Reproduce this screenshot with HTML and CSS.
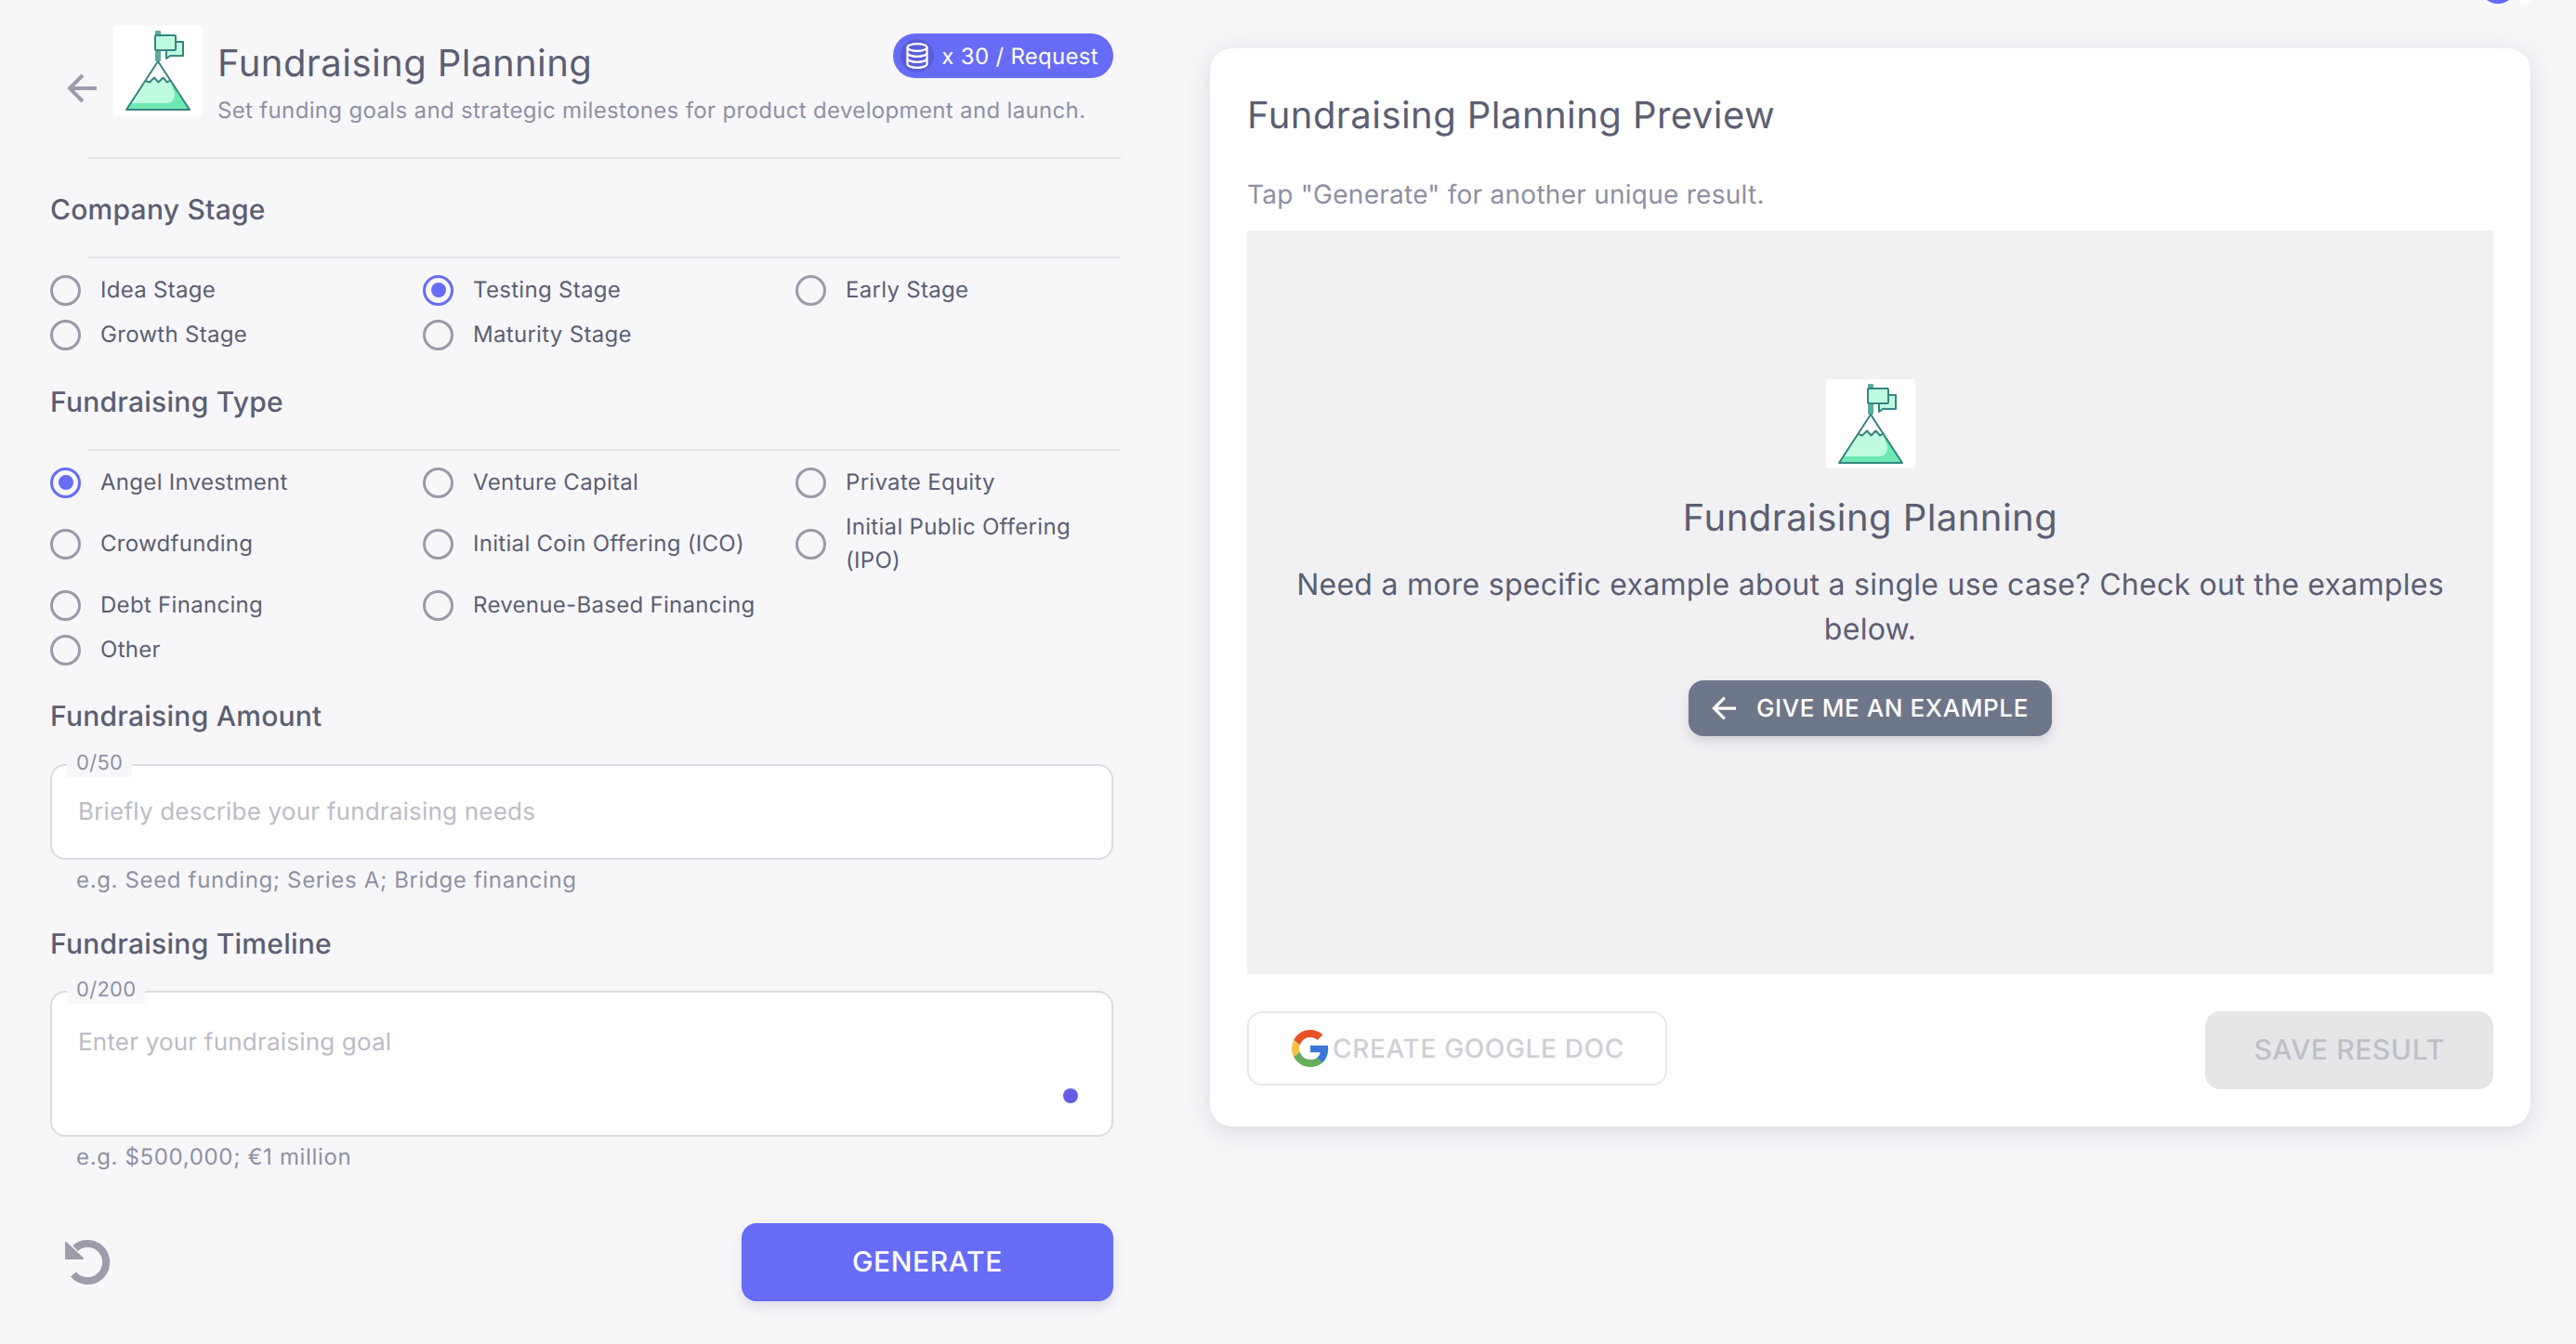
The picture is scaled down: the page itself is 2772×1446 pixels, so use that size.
FILE: index.html
```html
<!DOCTYPE html>
<html lang="en">
<head>
    <meta charset="UTF-8">
    <title>Fundraising Planning</title>
    <link rel="stylesheet" href="styles.css">
</head>
<body>
    <svg class="defs" width="0" height="0">
        <symbol id="mountain" viewBox="0 0 96 96">
            <rect width="96" height="96" fill="#fff"/>
            <rect x="45" y="5" width="6" height="33" rx="1" fill="#5aae98"/>
            <path d="M57 17H75V32H61L57 35Z" fill="#bdfbe0" stroke="#35847f" stroke-width="2" stroke-linejoin="round"/>
            <rect x="45" y="10" width="22" height="16" rx="1" fill="#bdfbe0" stroke="#35847f" stroke-width="2"/>
            <path d="M48 38L82 90H14Z" fill="#6fe9b4"/>
            <path d="M35 58L48 38L60 56L66 72Q66 83 58 83H19Z" fill="#c0fcdf"/>
            <path d="M34.5 59L48 38L62 58L58 60.5L53.5 55.5L48.5 60.5L44 55.5L39 60.5Z" fill="#fff"/>
            <path d="M34.5 59L39 60.5L44 55.5L48.5 60.5L53.5 55.5L58 60.5L62 58" fill="none" stroke="#35847f" stroke-width="2" stroke-linejoin="round"/>
            <path d="M48 38L82 90H14Z" fill="none" stroke="#35847f" stroke-width="2" stroke-linejoin="round"/>
        </symbol>
        <symbol id="arrow-left" viewBox="0 0 32 32">
            <path d="M32 16H3M17 2L3 16L17 30" fill="none" stroke="currentColor" stroke-width="4"/>
        </symbol>
    </svg>

    <div class="corner-avatar"></div>
    <div class="corner-dot"></div>

    <main class="page">
        <section class="form-panel">
            <header class="tool-header">
                <svg class="back-arrow"><use href="#arrow-left"/></svg>
                <svg class="tool-logo"><use href="#mountain"/></svg>
                <div class="tool-text">
                    <div class="tool-title-row">
                        <h1 class="tool-title">Fundraising Planning</h1>
                        <div class="cost-badge">
                            <span class="cost-icon">
                                <svg width="24" height="28" viewBox="0 0 24 28" fill="none" stroke="#fff" stroke-width="2.2">
                                    <ellipse cx="12" cy="5" rx="10.5" ry="3.8"/>
                                    <path d="M1.5 5V23C1.5 25 6 26.8 12 26.8S22.5 25 22.5 23V5"/>
                                    <path d="M1.5 11C1.5 13 6 14.8 12 14.8S22.5 13 22.5 11"/>
                                    <path d="M1.5 17C1.5 19 6 20.8 12 20.8S22.5 19 22.5 17"/>
                                </svg>
                            </span>
                            x 30 / Request
                        </div>
                    </div>
                    <p class="tool-desc">Set funding goals and strategic milestones for product development and launch.</p>
                </div>
            </header>

            <h2 class="field-label label-stage">Company Stage</h2>
            <div class="radio-grid">
                <label class="radio-item"><span class="radio"></span>Idea Stage</label>
                <label class="radio-item"><span class="radio checked"></span>Testing Stage</label>
                <label class="radio-item"><span class="radio"></span>Early Stage</label>
                <label class="radio-item"><span class="radio"></span>Growth Stage</label>
                <label class="radio-item"><span class="radio"></span>Maturity Stage</label>
            </div>

            <h2 class="field-label label-type">Fundraising Type</h2>
            <div class="radio-grid">
                <label class="radio-item spaced"><span class="radio checked"></span>Angel Investment</label>
                <label class="radio-item spaced"><span class="radio"></span>Venture Capital</label>
                <label class="radio-item spaced"><span class="radio"></span>Private Equity</label>
                <label class="radio-item tall"><span class="radio"></span>Crowdfunding</label>
                <label class="radio-item tall"><span class="radio"></span>Initial Coin Offering (ICO)</label>
                <label class="radio-item tall"><span class="radio"></span>Initial Public Offering (IPO)</label>
                <label class="radio-item"><span class="radio"></span>Debt Financing</label>
                <label class="radio-item"><span class="radio"></span>Revenue-Based Financing</label>
                <span></span>
                <label class="radio-item"><span class="radio"></span>Other</label>
            </div>

            <h2 class="field-label label-amount">Fundraising Amount</h2>
            <div class="text-field amount-field">
                <span class="counter">0/50</span>
                <span class="placeholder">Briefly describe your fundraising needs</span>
            </div>
            <p class="helper">e.g. Seed funding; Series A; Bridge financing</p>

            <h2 class="field-label label-timeline">Fundraising Timeline</h2>
            <div class="text-field timeline-field">
                <span class="counter">0/200</span>
                <span class="placeholder">Enter your fundraising goal</span>
                <span class="field-dot"></span>
            </div>
            <p class="helper">e.g. $500,000; €1 million</p>

            <div class="form-actions">
                <svg class="reset-icon" width="56" height="56" viewBox="0 0 56 56">
                    <path d="M12 40A20 20 0 1 0 14 12" fill="none" stroke="#9c9cab" stroke-width="8"/>
                    <path d="M4 6V23H22Z" fill="#9c9cab" stroke="#9c9cab" stroke-width="2" stroke-linejoin="round"/>
                </svg>
                <button class="generate-btn">GENERATE</button>
            </div>
        </section>

        <section class="preview-card">
            <h2 class="preview-title">Fundraising Planning Preview</h2>
            <p class="preview-hint">Tap "Generate" for another unique result.</p>
            <div class="preview-box">
                <svg class="tool-logo"><use href="#mountain"/></svg>
                <h3 class="preview-name">Fundraising Planning</h3>
                <p class="preview-text">Need a more specific example about a single use case? Check out the examples below.</p>
                <button class="example-btn">
                    <svg width="26" height="26"><use href="#arrow-left"/></svg>
                    GIVE ME AN EXAMPLE
                </button>
            </div>
            <div class="preview-actions">
                <button class="gdoc-btn">
                    <svg width="40" height="40" viewBox="0 0 48 48">
                        <path fill="#ea5028" d="M24 9.5c3.5 0 6.7 1.2 9.2 3.6l6.9-6.9C35.900 2.400 30.500 0 24 0 14.600 0 6.500 5.400 2.600 13.200l8 6.200C12.500 13.700 17.800 9.500 24 9.500z"/>
                        <path fill="#3b78d8" d="M47 24.500c0-1.600-.1-3.100-.4-4.500H24v9h12.900c-.6 3-2.200 5.500-4.700 7.200l7.700 6C44.400 37.900 47 31.800 47 24.500z"/>
                        <path fill="#f8c146" d="M10.500 28.600c-.5-1.400-.8-3-.8-4.600s.3-3.200.8-4.600l-8-6.200C.9 16.400 0 20.100 0 24s.9 7.600 2.600 10.800z"/>
                        <path fill="#66ad5c" d="M24 48c6.500 0 11.900-2.100 15.900-5.800l-7.700-6c-2.200 1.400-4.900 2.300-8.200 2.300-6.200 0-11.500-4.200-13.400-9.900l-8 6.200C6.500 42.600 14.600 48 24 48z"/>
                    </svg>
                    CREATE GOOGLE DOC
                </button>
                <button class="save-btn">SAVE RESULT</button>
            </div>
        </section>
    </main>
</body>
</html>
```

FILE: styles.css
```css
* {
    margin: 0;
    padding: 0;
    box-sizing: border-box;
}

body {
    font-family: Inter, "Noto Sans", sans-serif;
    background-color: #f7f7fa;
    color: #5c5e72;
    height: 1446px;
    overflow: hidden;
    position: relative;
    text-rendering: geometricPrecision;
}

button {
    font-family: inherit;
    border: none;
    text-rendering: geometricPrecision;
}

.defs {
    position: absolute;
}

.corner-avatar {
    position: absolute;
    left: 2668px;
    top: -36px;
    width: 40px;
    height: 40px;
    border-radius: 50%;
    background-color: #6569f5;
}

.corner-dot {
    position: absolute;
    left: 2708px;
    top: -14px;
    width: 18px;
    height: 18px;
    border-radius: 50%;
    background-color: #a5e05a;
    border: 4px solid #fff;
}

.page {
    display: flex;
    align-items: flex-start;
    gap: 104px;
    padding-left: 54px;
}

.form-panel {
    width: 1144px;
    flex-shrink: 0;
}

.tool-header {
    position: relative;
    display: flex;
    padding-top: 28px;
    padding-left: 68px;
    height: 171px;
    width: 1152px;
    background: linear-gradient(#e4e4e8, #e4e4e8) 40px 100% / 1112px 2px no-repeat;
}

.back-arrow {
    position: absolute;
    left: 18px;
    top: 79px;
    width: 32px;
    height: 32px;
    color: #9c9cab;
}

.tool-logo {
    display: block;
    width: 96px;
    height: 96px;
    flex-shrink: 0;
}

.tool-text {
    margin-left: 16px;
    width: 964px;
}

.tool-title-row {
    display: flex;
    justify-content: space-between;
    align-items: flex-start;
    width: 964px;
}

.tool-title {
    font-size: 40px;
    font-weight: 400;
    line-height: 48px;
    letter-spacing: 0.45px;
    margin-top: 16px;
}

.cost-badge {
    display: flex;
    align-items: center;
    gap: 8px;
    height: 48px;
    margin-top: 8px;
    padding: 0 16px 0 8px;
    border-radius: 24px;
    background-color: #666cf6;
    color: #fff;
    font-size: 24px;
    letter-spacing: 0.3px;
}

.cost-icon {
    display: flex;
    align-items: center;
    justify-content: center;
    width: 36px;
    height: 36px;
    border-radius: 50%;
    background-color: #5a5dd8;
}

.tool-desc {
    font-size: 24px;
    line-height: 32px;
    letter-spacing: 0.34px;
    margin-top: 11px;
    color: #8f90a2;
}

.field-label {
    font-size: 30px;
    font-weight: 500;
    line-height: 36px;
    letter-spacing: 0.25px;
}

.label-stage {
    margin-top: 37px;
    height: 68px;
}

.label-type {
    margin-top: 31px;
    height: 68px;
}

.label-amount {
    margin-top: 30px;
}

.label-timeline {
    margin-top: 35px;
}

.radio-grid {
    display: grid;
    grid-template-columns: 401px 401px 342px;
    width: 1152px;
    background: linear-gradient(#e4e4e8, #e4e4e8) 40px 0 / 1112px 2px no-repeat;
    padding-top: 12px;
}

.radio-item {
    display: flex;
    align-items: center;
    gap: 21px;
    min-height: 48px;
    font-size: 24px;
    letter-spacing: 0.3px;
    line-height: 36px;
}

.radio-item.spaced,
.radio-item.tall {
    margin-bottom: 6px;
}

.radio-item.tall {
    min-height: 72px;
}

.radio {
    width: 33px;
    height: 33px;
    flex-shrink: 0;
    border-radius: 50%;
    border: 3px solid #9a9aa8;
    display: flex;
    align-items: center;
    justify-content: center;
}

.radio.checked {
    border-color: #666cf6;
}

.radio.checked::after {
    content: "";
    width: 16px;
    height: 16px;
    border-radius: 50%;
    background-color: #666cf6;
}

.text-field {
    position: relative;
    background-color: #fff;
    border: 2px solid #dcdce0;
    border-radius: 16px;
    padding: 0 28px;
    font-size: 26px;
    letter-spacing: 0.2px;
}

.amount-field {
    height: 103px;
    margin-top: 33px;
    padding-top: 34px;
}

.timeline-field {
    height: 157px;
    margin-top: 32px;
    padding-top: 38px;
}

.counter {
    position: absolute;
    left: 16px;
    top: -18px;
    padding: 0 10px;
    background-color: #f7f7fa;
    color: #8f90a2;
    font-size: 22px;
    letter-spacing: 0.3px;
    line-height: 30px;
}

.placeholder {
    color: #bcbcc6;
    line-height: 32px;
}

.field-dot {
    position: absolute;
    right: 36px;
    bottom: 34px;
    width: 16px;
    height: 16px;
    border-radius: 50%;
    background-color: #675ce8;
}

.helper {
    margin-top: 6px;
    margin-left: 28px;
    font-size: 24px;
    line-height: 32px;
    letter-spacing: 0.65px;
    color: #8f90a2;
}

.form-actions {
    display: flex;
    justify-content: space-between;
    align-items: center;
    margin-top: 55px;
    padding-left: 13px;
}

.reset-icon {
    margin-top: 2px;
}

.generate-btn {
    width: 400px;
    height: 84px;
    border-radius: 16px;
    background-color: #666cf6;
    color: #fff;
    font-size: 30px;
    font-weight: 500;
    letter-spacing: 0.6px;
    box-shadow: 0 6px 12px rgba(80, 80, 110, 0.16);
}

.preview-card {
    width: 1421px;
    height: 1160px;
    margin-top: 52px;
    padding: 48px 40px 0;
    background-color: #fff;
    border-radius: 24px;
    box-shadow: 0 6px 24px rgba(80, 80, 110, 0.18);
}

.preview-title {
    font-size: 40px;
    font-weight: 400;
    line-height: 48px;
    letter-spacing: 0.45px;
}

.preview-hint {
    margin-top: 41px;
    font-size: 28px;
    line-height: 40px;
    letter-spacing: 0.26px;
    color: #8f90a2;
}

.preview-box {
    display: flex;
    flex-direction: column;
    align-items: center;
    height: 800px;
    margin-top: 19px;
    padding: 160px 40px 0;
    background-color: #f1f1f4;
}

.preview-name {
    margin-top: 29px;
    font-size: 40px;
    font-weight: 400;
    line-height: 48px;
    letter-spacing: 0.45px;
}

.preview-text {
    margin-top: 24px;
    font-size: 32px;
    line-height: 47.5px;
    letter-spacing: 0.27px;
    text-align: center;
}

.example-btn {
    display: flex;
    align-items: center;
    gap: 22px;
    height: 60px;
    margin-top: 32px;
    padding: 0 25px;
    border-radius: 16px;
    background-color: #6e768a;
    color: #fff;
    font-size: 26px;
    font-weight: 500;
    letter-spacing: 0.6px;
    box-shadow: 0 6px 12px rgba(80, 80, 110, 0.18);
}

.preview-actions {
    display: flex;
    justify-content: space-between;
    align-items: flex-start;
    margin-top: 40px;
}

.gdoc-btn {
    display: flex;
    align-items: center;
    gap: 4px;
    width: 452px;
    height: 80px;
    padding-left: 46px;
    border: 2px solid #e8e8ea;
    border-radius: 16px;
    background-color: #fff;
    color: #cfcfd6;
    font-size: 28px;
    font-weight: 500;
    letter-spacing: 0.65px;
}

.save-btn {
    width: 310px;
    height: 84px;
    border-radius: 16px;
    background-color: #e6e6e9;
    color: #bfbfc7;
    font-size: 30px;
    font-weight: 500;
    letter-spacing: 0.6px;
}
```
